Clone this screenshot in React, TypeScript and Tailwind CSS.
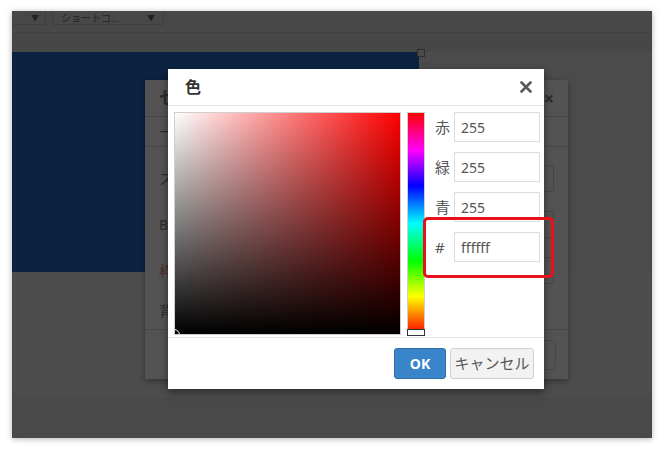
import React from "react";

const font = { fontFamily: '"Noto Sans", "Noto Sans CJK JP", sans-serif' };

function ColorField({ label, value }: { label: string; value: string }) {
  return (
    <div className="flex items-center h-[30px]">
      <span className="w-[19px] text-[15px] text-[#555]">{label}</span>
      <div className="w-[86px] h-[30px] border border-[#dcdcdc] flex items-center px-[6px] text-[14px] text-[#555]">
        {value}
      </div>
    </div>
  );
}

function BackDialog() {
  return (
    <div className="absolute left-[133px] top-[69px] w-[423px] h-[299px] bg-[#535353] shadow-[0_2px_6px_rgba(0,0,0,0.35)] flex flex-col text-[#2b2b2b]">
      <div className="h-[37px] flex items-center justify-between px-[14px] border-b border-[#474747]">
        <span className="text-[17px] font-bold">セ</span>
        <span className="text-[18px] font-bold">×</span>
      </div>
      <div className="h-[30px] flex items-center px-[14px] border-b border-[#474747]">
        <span className="text-[14px]">ー</span>
      </div>
      <div className="flex-1 flex flex-col gap-[20px] px-[14px] pt-[18px] text-[14px]">
        <div className="flex justify-between items-center h-[26px]"><span>ス</span><div className="w-[30px] h-[27px] border border-[#474747]" /></div>
        <div className="flex justify-between items-center h-[26px]"><span>B</span><div className="w-[30px] h-[27px] border border-[#474747]" /></div>
        <div className="flex justify-between items-center h-[26px]"><span className="text-[#4a2a2a]">枠</span><div className="w-[30px] h-[27px] border border-[#474747]" /></div>
        <div className="flex justify-between items-center h-[14px]"><span>背</span></div>
      </div>
      <div className="h-[50px] border-t border-[#474747] flex items-center justify-end px-[12px]">
        <div className="w-[30px] h-[30px] border border-[#474747] rounded-sm" />
      </div>
    </div>
  );
}

function ColorDialog() {
  return (
    <div className="absolute left-[156px] top-[58px] w-[376px] h-[320px] bg-white shadow-[0_3px_8px_rgba(0,0,0,0.45)] flex flex-col">
      <div className="h-[37px] flex items-center justify-between pl-[17px] pr-[12px] border-b border-[#e6e6e6]">
        <span className="text-[16px] font-bold text-[#333]">色</span>
        <svg width="12" height="12" viewBox="0 0 12 12">
          <path d="M1.5 1.5 L10.5 10.5 M10.5 1.5 L1.5 10.5" stroke="#595959" strokeWidth="2.6" strokeLinecap="round" />
        </svg>
      </div>
      <div className="h-[232px] flex pl-[6px] pt-[6px] border-b border-[#e6e6e6]">
        <div className="relative w-[227px] h-[223px] border border-[#cfcfcf] bg-[#ff0000] overflow-hidden">
          <div className="absolute inset-0 bg-gradient-to-r from-white to-transparent" />
          <div className="absolute inset-0 bg-gradient-to-b from-transparent to-black" />
          <div className="absolute left-[-7px] bottom-[-7px] w-[12px] h-[12px] rounded-full border border-white" />
        </div>
        <div className="relative ml-[6px] w-[18px] h-[223px] border border-[#cfcfcf] bg-[linear-gradient(to_bottom,#ff0000_0%,#ff00ff_17%,#0000ff_33%,#00ffff_50%,#00ff00_67%,#ffff00_83%,#ff0000_100%)]">
          <div className="absolute left-[-1px] right-[-1px] bottom-[-2px] h-[7px] bg-white border border-[#333]" />
        </div>
        <div className="ml-[10px] flex flex-col gap-[10px]">
          <ColorField label="赤" value="255" />
          <ColorField label="緑" value="255" />
          <ColorField label="青" value="255" />
          <ColorField label="#" value="ffffff" />
        </div>
      </div>
      <div className="flex-1 flex items-start justify-end gap-[4px] pr-[10px] pt-[10px]">
        <div className="w-[52px] h-[31px] rounded-[3px] bg-[#3a85c9] border border-[#2f72b0] flex items-center justify-center text-white text-[14px] font-bold">
          OK
        </div>
        <div className="w-[84px] h-[31px] rounded-[3px] bg-[#f2f2f2] border border-[#cfcfcf] flex items-center justify-center text-[#595959] text-[15px]">
          キャンセル
        </div>
      </div>
      <div className="absolute left-[255px] top-[148px] w-[131px] h-[61px] border-[3px] border-[#e8101a] rounded-[5px]" />
    </div>
  );
}

export default function App() {
  return (
    <div className="w-[664px] h-[451px] bg-white pt-[11px] pl-[12px] overflow-hidden" style={font}>
      <div className="relative w-[640px] h-[427px] bg-[#4b4b4b] shadow-[0_1px_6px_rgba(0,0,0,0.3)] flex flex-col overflow-hidden">
        {/* toolbar */}
        <div className="h-[22px] flex items-start gap-[6px] bg-[#484848] border-b border-[#404040]">
          <div className="w-[34px] h-[14px] border-r border-b border-[#3f3f3f] flex justify-end items-center pr-[6px] text-[8px] text-[#222] leading-[12px]">▼</div>
          <div className="w-[112px] h-[14px] border-x border-b border-[#3f3f3f] flex justify-between items-center px-[8px] text-[10px] text-[#222] leading-[12px]">
            <span>ショートコ...</span>
            <span className="text-[8px]">▼</span>
          </div>
        </div>
        <div className="h-[19px] bg-[#474747] bg-[radial-gradient(#525252_0.6px,transparent_0.6px)] bg-[length:4px_4px]" />
        <div className="h-[220px] flex">
          <div className="w-[407px] bg-[#0b2340]" />
          <div className="w-[8px] h-[8px] -ml-[2px] -mt-[3px] border border-[#2e2e2e] bg-[#4b4b4b]" />
        </div>
        <div className="flex-1 bg-[#4c4c4c]" />
        <div className="h-[40px] bg-[#494949] bg-[radial-gradient(#545454_0.6px,transparent_0.6px)] bg-[length:4px_4px]" />
        <BackDialog />
        <ColorDialog />
      </div>
    </div>
  );
}
